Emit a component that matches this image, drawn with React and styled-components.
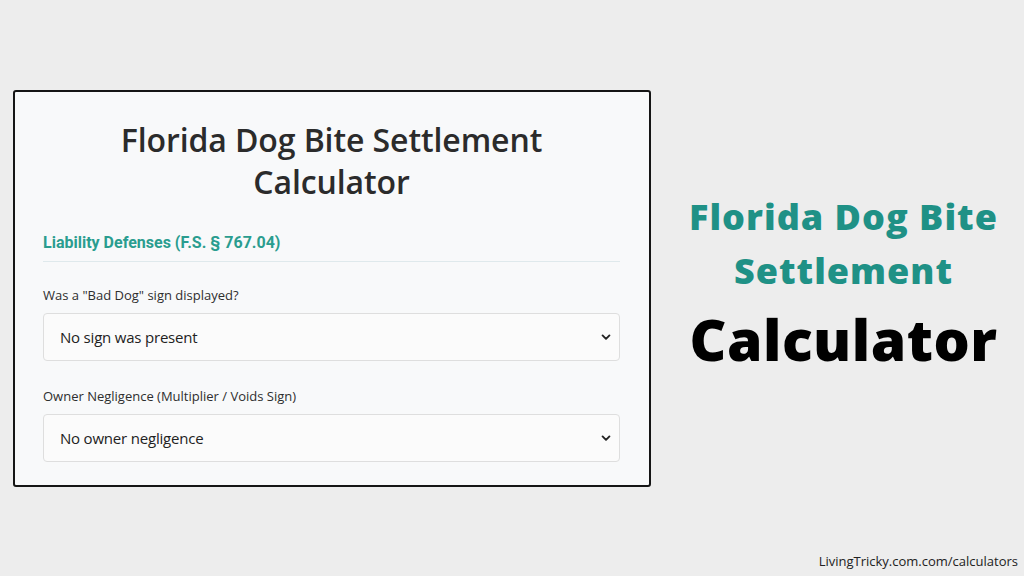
import React from "react";
import styled, { createGlobalStyle } from "styled-components";

const Global = createGlobalStyle`
  html, body { margin: 0; padding: 0; }
  body { background: #ededed; width: 1024px; height: 576px; overflow: hidden; }
  * { box-sizing: border-box; }
`;

const Page = styled.div`
  width: 1024px;
  height: 576px;
  display: flex;
  flex-direction: column;
  padding: 90px 0 0 13px;
`;

const Main = styled.div`
  display: flex;
  align-items: flex-start;
`;

const Card = styled.div`
  width: 638px;
  height: 397px;
  background: #f8f9fa;
  border: 2.5px solid #151515;
  border-radius: 3px;
  padding: 27px 29px 0 28px;
  display: flex;
  flex-direction: column;
`;

const Title = styled.h1`
  margin: 0;
  font-family: "Open Sans", "Noto Sans", sans-serif;
  font-weight: 600;
  font-size: 32px;
  letter-spacing: -0.1px;
  line-height: 42px;
  text-align: center;
  color: #2b2b2b;
`;

const SectionHead = styled.h2`
  margin: 30px 0 0;
  font-family: Roboto, "Liberation Sans", sans-serif;
  font-weight: 700;
  font-size: 16px;
  color: #2a9d8f;
  padding-bottom: 9px;
  border-bottom: 1px solid #dfe9ec;
`;

const Field = styled.div`
  display: flex;
  flex-direction: column;
  margin-top: ${(p) => p.$top}px;
`;

const Label = styled.label`
  font-family: "Open Sans", "Noto Sans", sans-serif;
  font-size: 13px;
  font-weight: 500;
  color: #2e2e2e;
  margin-bottom: 9px;
`;

const SelectBox = styled.div`
  height: 48px;
  border: 1px solid #dedede;
  border-radius: 4px;
  background: #fbfbfb;
  display: flex;
  align-items: center;
  justify-content: space-between;
  padding: 0 8px 0 16px;
  font-family: "Open Sans", "Noto Sans", sans-serif;
  font-size: 15px;
  letter-spacing: -0.2px;
  color: #222;
`;

const Side = styled.div`
  flex: 1;
  display: flex;
  flex-direction: column;
  align-items: center;
  padding: 100px 0 0 12px;
`;

const SideLine = styled.div`
  font-family: "Open Sans", "Noto Sans", sans-serif;
  font-weight: 800;
  font-size: ${(p) => p.$size}px;
  line-height: ${(p) => p.$lh}px;
  letter-spacing: ${(p) => p.$ls || 0}px;
  color: ${(p) => p.$color};
  white-space: nowrap;
`;

const Footer = styled.div`
  margin-top: auto;
  align-self: flex-end;
  padding: 0 6px 6px 0;
  font-family: "Open Sans", "Noto Sans", sans-serif;
  font-size: 13px;
  color: #222;
`;

const Chevron = () => (
  <svg width="10" height="10" viewBox="0 0 16 16">
    <path d="M2.5 5.5l5.5 5.5 5.5-5.5" fill="none" stroke="#222" strokeWidth="3" strokeLinecap="round" strokeLinejoin="round" />
  </svg>
);

export default function App() {
  return (
    <>
      <Global />
      <Page>
        <Main>
          <Card>
            <Title>
              Florida Dog Bite Settlement
              <br />
              Calculator
            </Title>
            <SectionHead>Liability Defenses (F.S. § 767.04)</SectionHead>
            <Field $top={24}>
              <Label>Was a "Bad Dog" sign displayed?</Label>
              <SelectBox>
                No sign was present
                <Chevron />
              </SelectBox>
            </Field>
            <Field $top={26}>
              <Label>Owner Negligence (Multiplier / Voids Sign)</Label>
              <SelectBox>
                No owner negligence
                <Chevron />
              </SelectBox>
            </Field>
          </Card>
          <Side>
            <SideLine $size={36} $lh={54} $ls={1} $color="#1f9186">Florida Dog Bite</SideLine>
            <SideLine $size={36} $lh={54} $ls={1} $color="#1f9186">Settlement</SideLine>
            <SideLine $size={57} $lh={82} $ls={0.5} $color="#000">Calculator</SideLine>
          </Side>
        </Main>
        <Footer>LivingTricky.com.com/calculators</Footer>
      </Page>
    </>
  );
}
